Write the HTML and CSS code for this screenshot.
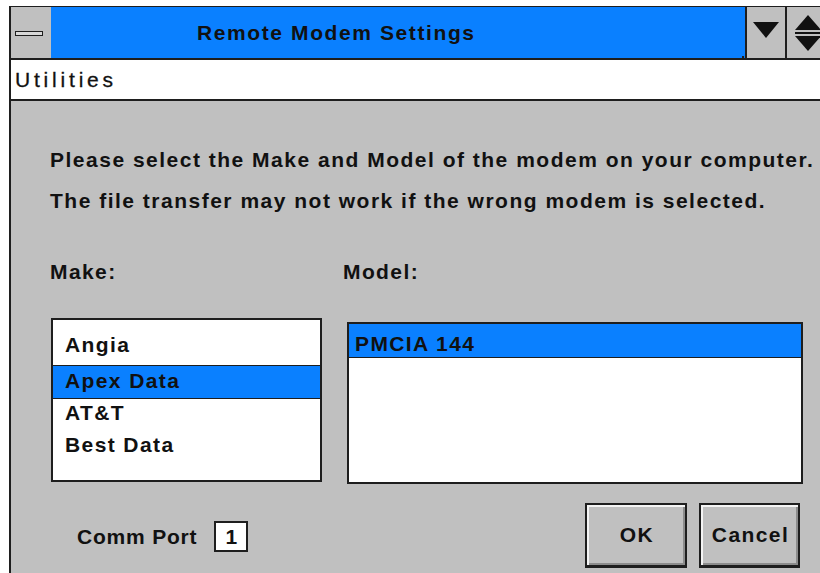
FILE: index.html
```html
<!DOCTYPE html>
<html>
<head>
<meta charset="utf-8">
<title>Remote Modem Settings</title>
<link rel="stylesheet" href="styles.css">
</head>
<body>
<div class="window">
  <div class="titlebar">
    <div class="sysmenu"><span class="sysbar"></span></div>
    <div class="caption"><span class="caption-text">Remote Modem Settings</span><span class="corner"></span></div>
    <div class="tbtn tbtn-min">
      <svg width="26" height="18" viewBox="0 0 26 18"><polygon points="0,1 26,1 13,17" fill="#111"/></svg>
    </div>
    <div class="tbtn tbtn-max">
      <svg width="26" height="38" viewBox="0 0 26 38"><polygon points="13,1 26,16 0,16" fill="#111"/><rect x="0" y="18" width="26" height="2" fill="#111"/><polygon points="0,22 26,22 13,37" fill="#111"/></svg>
    </div>
  </div>
  <div class="menubar"><span class="menu-item">Utilities</span></div>
  <div class="content">
    <p class="intro">Please select the Make and Model of the modem on your computer.</p>
    <p class="intro">The file transfer may not work if the wrong modem is selected.</p>
    <div class="pickers">
      <div class="picker picker-make">
        <div class="label">Make:</div>
        <ul class="listbox make-list">
          <li class="item">Angia</li>
          <li class="item selected">Apex Data</li>
          <li class="item">AT&amp;T</li>
          <li class="item">Best Data</li>
        </ul>
      </div>
      <div class="picker picker-model">
        <div class="label">Model:</div>
        <ul class="listbox model-list">
          <li class="item selected">PMCIA 144</li>
        </ul>
      </div>
    </div>
    <div class="footer">
      <div class="port">
        <span class="port-label">Comm Port</span>
        <span class="port-box">1</span>
      </div>
      <div class="buttons">
        <button class="btn btn-ok">OK</button>
        <button class="btn btn-cancel">Cancel</button>
      </div>
    </div>
  </div>
</div>
</body>
</html>
```
FILE: styles.css
```css
html, body {
  margin: 0;
  padding: 0;
  background: #ffffff;
  overflow: hidden;
  width: 820px;
  height: 573px;
}

body {
  font-family: "Liberation Sans", Arial, sans-serif;
  color: #111;
}

.window {
  margin: 6px 0 0 9px;
  width: 811px;
  height: 567px;
  box-sizing: border-box;
  overflow: hidden;
  border-left: 2px solid #1e1e1e;
  border-top: 1px solid #1e1e1e;
  background: #c0c0c0;
  display: flex;
  flex-direction: column;
}

/* title bar */
.titlebar {
  display: flex;
  flex-shrink: 0;
  height: 51px;
  border-bottom: 2px solid #1e1e1e;
}

.titlebar > div {
  flex-shrink: 0;
}

.sysmenu {
  width: 40px;
  background: #c0c0c0;
  display: flex;
  align-items: center;
  justify-content: center;
}

.sysbar {
  display: block;
  width: 26px;
  height: 3px;
  border: 1px solid #1e1e1e;
  background: #d8d8d8;
  margin-left: -4px;
  margin-top: 2px;
}

.caption {
  position: relative;
  width: 696px;
  background: #0a80ff;
  display: flex;
  align-items: center;
  padding-left: 146px;
  box-sizing: border-box;
  border-right: 2px solid #1e1e1e;
}

.caption-text {
  font-weight: bold;
  font-size: 21px;
  letter-spacing: 1.6px;
}

.corner {
  position: absolute;
  right: 1px;
  bottom: 0;
  width: 2px;
  height: 2px;
  background: #1e1e1e;
}

.tbtn {
  background: #c0c0c0;
  display: flex;
  align-items: center;
  justify-content: center;
}

.tbtn-min {
  width: 38px;
  border-right: 2px solid #1e1e1e;
}

.tbtn-min svg {
  margin-top: -6px;
}

.tbtn-max {
  width: 42px;
}

/* menu bar */
.menubar {
  flex-shrink: 0;
  height: 39px;
  background: #ffffff;
  border-bottom: 2px solid #1e1e1e;
  display: flex;
  align-items: center;
}

.menu-item {
  margin-left: 4px;
  font-size: 21px;
  letter-spacing: 3.8px;
  -webkit-text-stroke: 0.3px #111;
}

/* dialog body */
.content {
  padding: 0 0 0 39px;
  flex: 1;
  font-size: 21px;
  font-weight: bold;
  letter-spacing: 1.4px;
}

.intro {
  margin: 0;
  line-height: 41px;
  white-space: nowrap;
  letter-spacing: 1.5px;
}

.intro:first-child {
  margin-top: 38px;
}

.pickers {
  display: flex;
  margin-top: 39px;
}

.label {
  line-height: 24px;
}

.picker-make {
  width: 293px;
}

.listbox {
  list-style: none;
  margin: 0;
  padding: 0;
  background: #ffffff;
  border: 2px solid #1e1e1e;
  box-sizing: border-box;
}

.make-list {
  margin: 34px 0 0 1px;
  width: 271px;
  height: 164px;
  padding-top: 10px;
}

.model-list {
  margin: 38px 0 0 4px;
  width: 456px;
  height: 162px;
}

.item {
  box-sizing: border-box;
  height: 32px;
  line-height: 28px;
  padding-left: 12px;
}

.make-list .item:first-child {
  height: 35px;
  line-height: 29px;
}

.selected {
  background: #0a80ff;
  border-top: 1px solid #1e1e1e;
  border-bottom: 1px solid #1e1e1e;
}

.make-list .selected {
  height: 34px;
  line-height: 30px;
}

.model-list .selected {
  border-top: 0;
  height: 34px;
  padding-left: 6px;
  padding-top: 7px;
  line-height: 26px;
}

/* footer row */
.footer {
  display: flex;
  align-items: center;
  margin-top: 19px;
}

.port {
  display: flex;
  align-items: center;
  margin-left: 27px;
  width: 508px;
  padding-top: 2px;
}

.port-label {
  letter-spacing: 0.8px;
}

.port-box {
  margin-left: 17px;
  width: 34px;
  height: 31px;
  box-sizing: border-box;
  border: 2px solid #1e1e1e;
  background: #ffffff;
  letter-spacing: 0;
  display: flex;
  align-items: center;
  justify-content: center;
}

.buttons {
  display: flex;
  gap: 12px;
}

.btn {
  font-family: "Liberation Sans", Arial, sans-serif;
  font-weight: bold;
  font-size: 21px;
  letter-spacing: 1.4px;
  color: #111;
  height: 65px;
  background: #c0c0c0;
  border: 2px solid #1e1e1e;
  border-bottom-width: 3px;
  box-shadow: inset 2px 2px 0 #f4f4f4, inset -2px -2px 0 #8c8c8c;
  padding: 0 0 0 2px;
}

.btn-ok {
  width: 102px;
}

.btn-cancel {
  width: 101px;
}
```
